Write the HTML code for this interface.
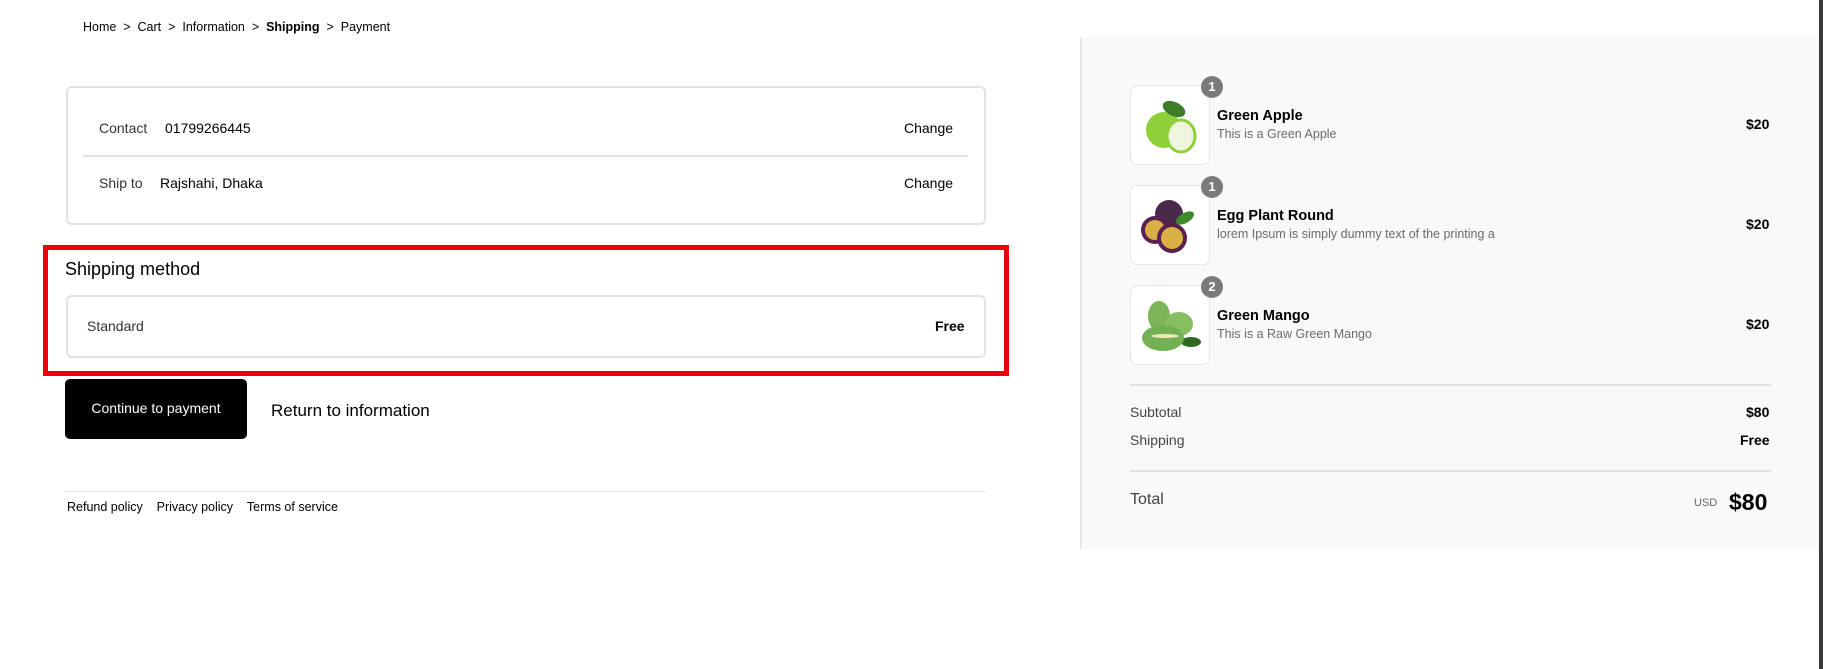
<!DOCTYPE html>
<html><head><meta charset="utf-8"><style>
*{margin:0;padding:0;box-sizing:border-box}
body{width:1823px;height:669px;background:#fff;font-family:"Liberation Sans",sans-serif;color:#000;position:relative;overflow:hidden}
.a{position:absolute;white-space:nowrap}
.box{position:absolute;border:2px solid #e2e2e6;border-radius:6px;background:#fff}
.img{position:absolute;left:1130px;width:80px;height:80px;border:1px solid #e6e6e6;border-radius:7px;background:#fff}
.badge{position:absolute;width:22px;height:22px;border-radius:50%;background:#7a7a7a;color:#fff;font-size:13px;font-weight:bold;text-align:center;line-height:22px}
.name{font-size:14.5px;font-weight:bold}
.desc{font-size:12.5px;color:#6b6b6b}
.price{font-size:14px;font-weight:bold}
</style></head><body>
<div class="a" style="left:83px;top:20px;font-size:12.5px">Home&nbsp;&nbsp;&gt;&nbsp;&nbsp;Cart&nbsp;&nbsp;&gt;&nbsp;&nbsp;Information&nbsp;&nbsp;&gt;&nbsp;&nbsp;<b>Shipping</b>&nbsp;&nbsp;&gt;&nbsp;&nbsp;Payment</div>

<div class="box" style="left:66px;top:86px;width:920px;height:139px"></div>
<div class="a" style="left:99px;top:120px;font-size:14px;color:#333">Contact</div>
<div class="a" style="left:165px;top:120px;font-size:14px">01799266445</div>
<div class="a" style="left:904px;top:120px;font-size:14px">Change</div>
<div class="a" style="left:83px;top:155px;width:885px;height:2px;background:#e2e2e6"></div>
<div class="a" style="left:99px;top:175px;font-size:14px;color:#333">Ship to</div>
<div class="a" style="left:160px;top:175px;font-size:14px">Rajshahi, Dhaka</div>
<div class="a" style="left:904px;top:175px;font-size:14px">Change</div>

<div class="a" style="left:43px;top:245px;width:966px;height:131px;border:5px solid #e8000b"></div>
<div class="a" style="left:65px;top:259px;font-size:18px">Shipping method</div>
<div class="box" style="left:66px;top:295px;width:920px;height:63px"></div>
<div class="a" style="left:87px;top:318px;font-size:14px;color:#333">Standard</div>
<div class="a" style="left:935px;top:318px;font-size:14px;font-weight:bold">Free</div>

<div class="a" style="left:65px;top:379px;width:182px;height:60px;background:#000;border-radius:5px;color:#fff;font-size:14px;text-align:center;line-height:58px">Continue to payment</div>
<div class="a" style="left:271px;top:401px;font-size:17px">Return to information</div>

<div class="a" style="left:66px;top:491px;width:920px;height:1px;background:#e6e6e6"></div>
<div class="a" style="left:67px;top:500px;font-size:12.5px">Refund policy&nbsp;&nbsp;&nbsp;&nbsp;Privacy policy&nbsp;&nbsp;&nbsp;&nbsp;Terms of service</div>

<div class="a" style="left:1080px;top:37px;width:739px;height:512px;background:#f9f9f9;border-left:2px solid #e6e6e6"></div>
<div class="a" style="left:1819px;top:0;width:4px;height:669px;background:#3a3a3a"></div>

<div class="img" style="top:85px"><svg width="80" height="80"><circle cx="33" cy="44" r="18" fill="#8fcf3a"/><ellipse cx="50" cy="50" rx="14" ry="16" fill="#eef5dc" stroke="#8fcf3a" stroke-width="3"/><ellipse cx="43" cy="23" rx="12" ry="7" fill="#3d7d2a" transform="rotate(25 43 23)"/></svg></div>
<div class="badge" style="left:1201px;top:76px">1</div>
<div class="a name" style="left:1217px;top:108px">Green Apple</div>
<div class="a desc" style="left:1217px;top:127px">This is a Green Apple</div>
<div class="a price" style="left:1746px;top:116px">$20</div>

<div class="img" style="top:185px"><svg width="80" height="80"><circle cx="38" cy="28" r="14" fill="#4a2a4a"/><ellipse cx="54" cy="32" rx="10" ry="5" fill="#3d8a2a" transform="rotate(-30 54 32)"/><circle cx="24" cy="44" r="14" fill="#5a2050"/><circle cx="24" cy="44" r="10" fill="#d9b045"/><circle cx="41" cy="52" r="15" fill="#5a2050"/><circle cx="41" cy="52" r="11" fill="#d9b045"/></svg></div>
<div class="badge" style="left:1201px;top:176px">1</div>
<div class="a name" style="left:1217px;top:208px">Egg Plant Round</div>
<div class="a desc" style="left:1217px;top:227px">lorem Ipsum is simply dummy text of the printing a</div>
<div class="a price" style="left:1746px;top:216px">$20</div>

<div class="img" style="top:285px"><svg width="80" height="80"><ellipse cx="28" cy="30" rx="11" ry="15" fill="#7cb55a"/><ellipse cx="48" cy="38" rx="14" ry="12" fill="#86bf62"/><ellipse cx="60" cy="56" rx="10" ry="5" fill="#2f6a22"/><ellipse cx="32" cy="52" rx="21" ry="13" fill="#72b051"/><ellipse cx="34" cy="50" rx="14" ry="2" fill="#efe6b0"/></svg></div>
<div class="badge" style="left:1201px;top:276px">2</div>
<div class="a name" style="left:1217px;top:308px">Green Mango</div>
<div class="a desc" style="left:1217px;top:327px">This is a Raw Green Mango</div>
<div class="a price" style="left:1746px;top:316px">$20</div>

<div class="a" style="left:1130px;top:384px;width:641px;height:2px;background:#e2e2e6"></div>
<div class="a" style="left:1130px;top:404px;font-size:14px;color:#444">Subtotal</div>
<div class="a price" style="left:1746px;top:404px">$80</div>
<div class="a" style="left:1130px;top:432px;font-size:14px;color:#444">Shipping</div>
<div class="a price" style="left:1740px;top:432px">Free</div>
<div class="a" style="left:1130px;top:470px;width:641px;height:2px;background:#e2e2e6"></div>
<div class="a" style="left:1130px;top:491px;font-size:16px;color:#444">Total</div>
<div class="a" style="left:1694px;top:497px;font-size:11px;color:#666">USD</div>
<div class="a" style="left:1729px;top:489px;font-size:23px;font-weight:bold">$80</div>
</body></html>
